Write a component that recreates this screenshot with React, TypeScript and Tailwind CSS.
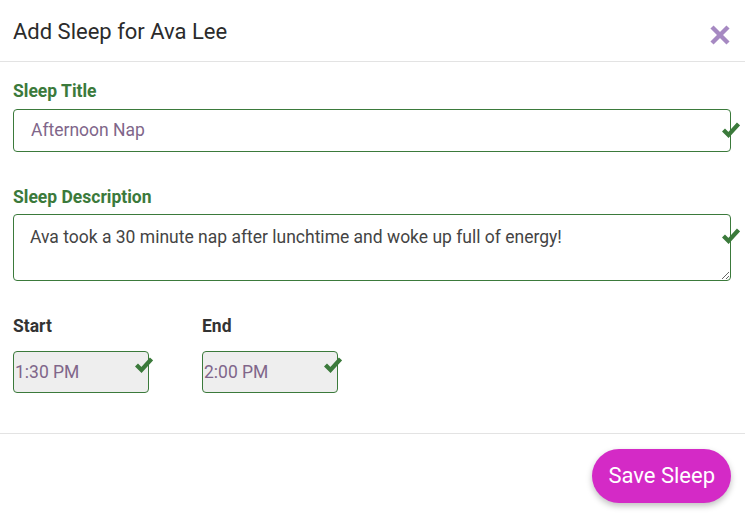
import React from 'react';

const Check = ({ className }: { className: string }) => (
  <svg className={className} width="18" height="18" viewBox="0 0 18 18" fill="none">
    <polyline points="1.5,9 6.5,14 16.5,3" stroke="#3b7a3b" strokeWidth="4.2" strokeLinecap="butt" strokeLinejoin="miter" />
  </svg>
);

const TimeField = ({ label, value }: { label: string; value: string }) => (
  <div className="flex flex-col w-[136px]">
    <span className="text-[17.5px] font-bold text-[#333] leading-none">{label}</span>
    <div className="relative mt-[15px]">
      <input
        readOnly
        defaultValue={value}
        className="w-[136px] h-[42px] bg-[#eeeeee] border border-[#3b7a3b] rounded-[4px] px-[1px] text-[17.5px] text-[#80668a] outline-none"
      />
      <Check className="absolute right-[-4px] top-[5px]" />
    </div>
  </div>
);

export default function App() {
  return (
    <div className="w-[745px] h-[517px] bg-white flex flex-col overflow-hidden" style={{ fontFamily: 'Roboto, "Liberation Sans", sans-serif' }}>
      <div className="h-[62px] shrink-0 border-b border-[#e3e3e3] flex items-center justify-between pl-[13px] pr-[14px]">
        <h1 className="text-[22px] font-normal text-[#2b2b2b] pt-[1px]">Add Sleep for Ava Lee</h1>
        <svg width="22" height="22" viewBox="0 0 22 22" className="mt-[8px]">
          <line x1="3" y1="3" x2="19" y2="19" stroke="#a689c2" strokeWidth="4.5" />
          <line x1="19" y1="3" x2="3" y2="19" stroke="#a689c2" strokeWidth="4.5" />
        </svg>
      </div>

      <div className="flex flex-col shrink-0 pl-[13px] pr-[14px] pt-[21px]">
        <label className="text-[17.5px] font-bold text-[#3b7a3b] leading-none">Sleep Title</label>
        <div className="relative mt-[8px]">
          <input
            readOnly
            defaultValue="Afternoon Nap"
            className="w-full h-[43px] border border-[#3b7a3b] rounded-[4px] pl-[17px] text-[17.5px] text-[#80668a] outline-none"
          />
          <Check className="absolute right-[-9px] top-[12px]" />
        </div>

        <label className="text-[17.5px] font-bold text-[#3b7a3b] leading-none mt-[37px]">Sleep Description</label>
        <div className="relative mt-[8px] flex">
          <textarea
            readOnly
            defaultValue="Ava took a 30 minute nap after lunchtime and woke up full of energy!"
            className="w-full h-[67px] border border-[#3b7a3b] rounded-[4px] pl-[16px] pt-[9px] text-[17.5px] text-[#444] outline-none"
          />
          <Check className="absolute right-[-9px] top-[13px]" />
        </div>

        <div className="flex gap-[53px] mt-[37px]">
          <TimeField label="Start" value="1:30 PM" />
          <TimeField label="End" value="2:00 PM" />
        </div>
      </div>

      <div className="mt-[40px] shrink-0 border-t border-[#e3e3e3] flex justify-end pr-[14px] pt-[15px]">
        <button className="h-[54px] px-[16px] rounded-full bg-[#d42ac6] text-white text-[22px] shadow-[0_3px_6px_rgba(0,0,0,0.25)]">
          Save Sleep
        </button>
      </div>
    </div>
  );
}
